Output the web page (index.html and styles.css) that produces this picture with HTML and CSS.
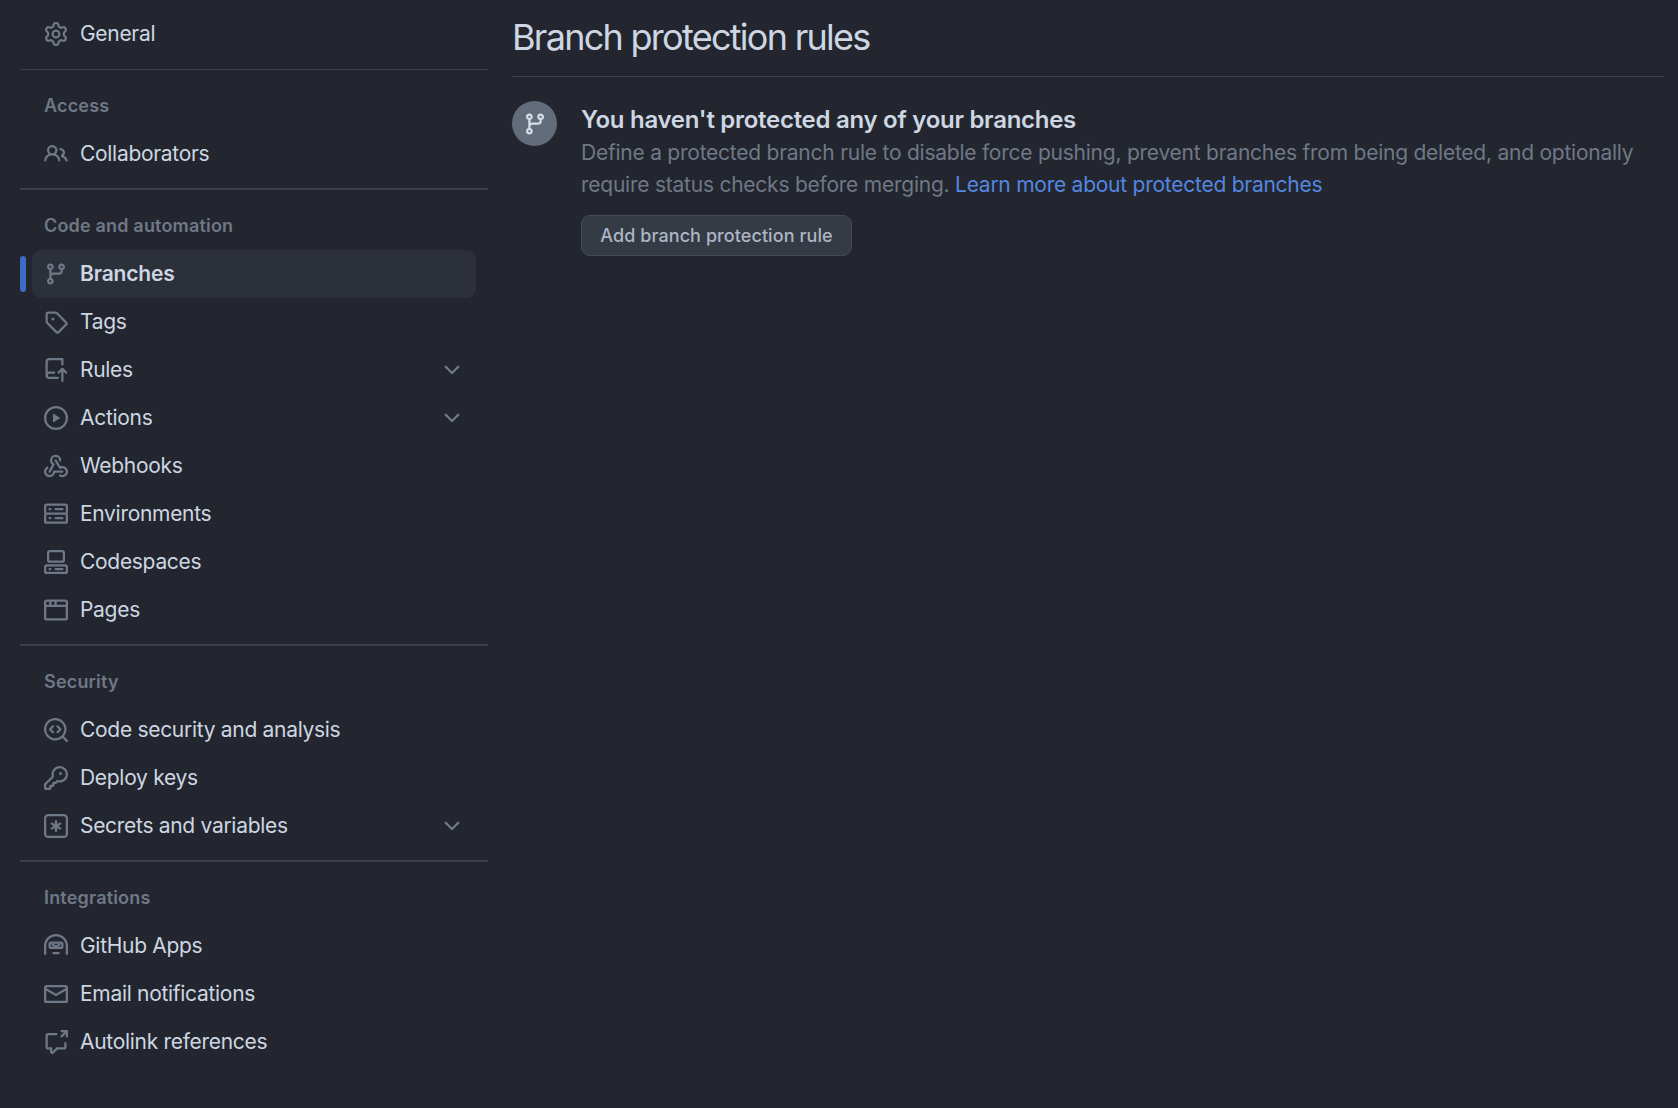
FILE: index.html
```html
<!DOCTYPE html>
<html lang="en">
<head>
<meta charset="utf-8">
<title>Branch protection rules</title>
<link rel="stylesheet" href="styles.css">
</head>
<body>
<svg class="defs" width="0" height="0" aria-hidden="true">
  <symbol id="i-gear" viewBox="0 0 16 16"><path d="M8 0a8.2 8.2 0 0 1 .701.031C9.444.095 9.99.645 10.16 1.29l.288 1.107c.018.066.079.158.212.224.231.114.454.243.668.386.123.082.233.09.299.071l1.103-.303c.644-.176 1.392.021 1.82.63.27.385.506.792.704 1.218.315.675.111 1.422-.364 1.891l-.814.806c-.049.048-.098.147-.088.294.016.257.016.515 0 .772-.01.147.038.246.088.294l.814.806c.475.469.679 1.216.364 1.891a7.977 7.977 0 0 1-.704 1.217c-.428.61-1.176.807-1.82.63l-1.102-.302c-.067-.019-.177-.011-.3.071a5.909 5.909 0 0 1-.668.386c-.133.066-.194.158-.211.224l-.29 1.106c-.168.646-.715 1.196-1.458 1.26a8.006 8.006 0 0 1-1.402 0c-.743-.064-1.289-.614-1.458-1.26l-.289-1.106c-.018-.066-.079-.158-.212-.224a5.738 5.738 0 0 1-.668-.386c-.123-.082-.233-.09-.299-.071l-1.103.303c-.644.176-1.392-.021-1.82-.63a8.12 8.12 0 0 1-.704-1.218c-.315-.675-.111-1.422.363-1.891l.815-.806c.05-.048.098-.147.088-.294a6.214 6.214 0 0 1 0-.772c.01-.147-.038-.246-.088-.294l-.815-.806C.635 6.045.431 5.298.746 4.623a7.92 7.92 0 0 1 .704-1.217c.428-.61 1.176-.807 1.82-.63l1.102.302c.067.019.177.011.3-.071.214-.143.437-.272.668-.386.133-.066.194-.158.211-.224l.29-1.106C6.009.645 6.556.095 7.299.03 7.53.01 7.764 0 8 0Zm-.571 1.525c-.036.003-.108.036-.137.146l-.289 1.105c-.147.561-.549.967-.998 1.189-.173.086-.34.183-.5.29-.417.278-.97.423-1.529.27l-1.103-.303c-.109-.03-.175.016-.195.045-.22.312-.412.644-.573.99-.014.031-.021.11.059.19l.815.806c.411.406.562.957.53 1.456a4.709 4.709 0 0 0 0 .582c.032.499-.119 1.05-.53 1.456l-.815.806c-.081.08-.073.159-.059.19.162.346.353.677.573.989.02.03.085.076.195.046l1.102-.303c.56-.153 1.113-.008 1.53.27.161.107.328.204.501.29.447.222.85.629.997 1.189l.289 1.105c.029.109.101.143.137.146a6.6 6.6 0 0 0 1.142 0c.036-.003.108-.036.137-.146l.289-1.105c.147-.561.549-.967.998-1.189.173-.086.34-.183.5-.29.417-.278.97-.423 1.529-.27l1.103.303c.109.029.175-.016.195-.045.22-.313.411-.644.573-.99.014-.031.021-.11-.059-.19l-.815-.806c-.411-.406-.562-.957-.53-1.456a4.709 4.709 0 0 0 0-.582c-.032-.499.119-1.05.53-1.456l.815-.806c.081-.08.073-.159.059-.19a6.464 6.464 0 0 0-.573-.989c-.02-.03-.085-.076-.195-.046l-1.102.303c-.56.153-1.113.008-1.53-.27a4.44 4.44 0 0 0-.501-.29c-.447-.222-.85-.629-.997-1.189l-.289-1.105c-.029-.11-.101-.143-.137-.146a6.6 6.6 0 0 0-1.142 0ZM11 8a3 3 0 1 1-6 0 3 3 0 0 1 6 0ZM9.5 8a1.5 1.5 0 1 0-3.001.001A1.5 1.5 0 0 0 9.5 8Z"/></symbol>
  <symbol id="i-people" viewBox="0 0 16 16"><path d="M2 5.5a3.5 3.5 0 1 1 5.898 2.549 5.508 5.508 0 0 1 3.034 4.084.75.75 0 1 1-1.482.235 4 4 0 0 0-7.9 0 .75.75 0 0 1-1.482-.236A5.507 5.507 0 0 1 3.102 8.05 3.493 3.493 0 0 1 2 5.5ZM11 4a3.001 3.001 0 0 1 2.22 5.018 5.01 5.01 0 0 1 2.56 3.012.749.749 0 0 1-.885.954.752.752 0 0 1-.549-.514 3.507 3.507 0 0 0-2.522-2.372.75.75 0 0 1-.574-.73v-.352a.75.75 0 0 1 .416-.672A1.5 1.5 0 0 0 11 5.5.75.75 0 0 1 11 4Zm-5.5-.5a2 2 0 1 0-.001 3.999A2 2 0 0 0 5.5 3.5Z"/></symbol>
  <symbol id="i-branch" viewBox="0 0 16 16"><path d="M9.5 3.25a2.25 2.25 0 1 1 3 2.122V6A2.5 2.5 0 0 1 10 8.5H6a1 1 0 0 0-1 1v1.128a2.251 2.251 0 1 1-1.5 0V5.372a2.25 2.25 0 1 1 1.5 0v1.836A2.493 2.493 0 0 1 6 7h4a1 1 0 0 0 1-1v-.628A2.25 2.25 0 0 1 9.5 3.25Zm-6 0a.75.75 0 1 0 1.5 0 .75.75 0 0 0-1.5 0Zm8.25-.75a.75.75 0 1 0 0 1.5.75.75 0 0 0 0-1.5ZM4.25 12a.75.75 0 1 0 0 1.5.75.75 0 0 0 0-1.5Z"/></symbol>
  <symbol id="i-tag" viewBox="0 0 16 16"><path d="M1 7.775V2.75C1 1.784 1.784 1 2.75 1h5.025c.464 0 .91.184 1.238.513l6.25 6.25a1.75 1.75 0 0 1 0 2.474l-5.026 5.026a1.75 1.75 0 0 1-2.474 0l-6.25-6.25A1.752 1.752 0 0 1 1 7.775Zm1.5 0c0 .066.026.13.073.177l6.25 6.25a.25.25 0 0 0 .354 0l5.025-5.025a.25.25 0 0 0 0-.354l-6.25-6.25a.25.25 0 0 0-.177-.073H2.75a.25.25 0 0 0-.25.25ZM6 5a1 1 0 1 1 0 2 1 1 0 0 1 0-2Z"/></symbol>
  <symbol id="i-push" viewBox="0 0 16 16"><path d="M1 2.5A2.5 2.5 0 0 1 3.5 0h8.75a.75.75 0 0 1 .75.75v3.5a.75.75 0 0 1-1.5 0V1.5h-8a1 1 0 0 0-1 1v6.708A2.493 2.493 0 0 1 3.5 9h3.25a.75.75 0 0 1 0 1.5H3.5a1 1 0 0 0 0 2h5.75a.75.75 0 0 1 0 1.5H3.5A2.5 2.5 0 0 1 1 11.5Zm13.23 7.79h-.001l-1.224-1.224v6.184a.75.75 0 0 1-1.5 0V9.066L10.28 10.29a.75.75 0 0 1-1.06-1.061l2.505-2.504a.75.75 0 0 1 1.06 0L15.29 9.23a.751.751 0 0 1-.018 1.042.751.751 0 0 1-1.042.018Z"/></symbol>
  <symbol id="i-play" viewBox="0 0 16 16"><path d="M8 0a8 8 0 1 1 0 16A8 8 0 0 1 8 0ZM1.5 8a6.5 6.5 0 1 0 13 0 6.5 6.5 0 0 0-13 0Zm4.879-2.773 4.264 2.559a.25.25 0 0 1 0 .428l-4.264 2.559A.25.25 0 0 1 6 10.559V5.442a.25.25 0 0 1 .379-.215Z"/></symbol>
  <symbol id="i-webhook" viewBox="0 0 16 16"><path d="M5.5 4.25a2.25 2.25 0 0 1 4.5 0 .75.75 0 0 0 1.5 0 3.75 3.75 0 1 0-6.14 2.889l-2.272 4.258a.75.75 0 0 0 1.324.706L7 7.25a.75.75 0 0 0-.309-1.015A2.25 2.25 0 0 1 5.5 4.25Z"/><path d="M7.364 3.607a.75.75 0 0 1 1.03.257l2.608 4.349a3.75 3.75 0 1 1-.628 6.785.75.75 0 0 1 .752-1.299 2.25 2.25 0 1 0-.033-3.88.75.75 0 0 1-1.03-.256L7.107 4.636a.75.75 0 0 1 .257-1.03Z"/><path d="M2.9 8.776A.75.75 0 0 1 2.625 9.8 2.25 2.25 0 1 0 6 11.75a.75.75 0 0 1 .75-.751h5.5a.75.75 0 0 1 0 1.5H7.425a3.751 3.751 0 1 1-5.55-3.998.75.75 0 0 1 1.024.274Z"/></symbol>
  <symbol id="i-server" viewBox="0 0 16 16"><path d="M1.75 1h12.5c.966 0 1.75.784 1.75 1.75v4c0 .372-.116.717-.314 1 .198.283.314.628.314 1v4a1.75 1.75 0 0 1-1.75 1.75H1.75A1.75 1.75 0 0 1 0 12.75v-4c0-.358.109-.707.314-1a1.739 1.739 0 0 1-.314-1v-4C0 1.784.784 1 1.75 1ZM1.5 2.75v4c0 .138.112.25.25.25h12.5a.25.25 0 0 0 .25-.25v-4a.25.25 0 0 0-.25-.25H1.75a.25.25 0 0 0-.25.25Zm.25 5.75a.25.25 0 0 0-.25.25v4c0 .138.112.25.25.25h12.5a.25.25 0 0 0 .25-.25v-4a.25.25 0 0 0-.25-.25ZM7 4.75A.75.75 0 0 1 7.75 4h4.5a.75.75 0 0 1 0 1.5h-4.5A.75.75 0 0 1 7 4.75ZM7.75 10h4.5a.75.75 0 0 1 0 1.5h-4.5a.75.75 0 0 1 0-1.5ZM3 4.75A.75.75 0 0 1 3.75 4h.5a.75.75 0 0 1 0 1.5h-.5A.75.75 0 0 1 3 4.75ZM3.75 10h.5a.75.75 0 0 1 0 1.5h-.5a.75.75 0 0 1 0-1.5Z"/></symbol>
  <symbol id="i-codespaces" viewBox="0 0 16 16"><path d="M0 11.25c0-.966.784-1.75 1.75-1.75h12.5c.966 0 1.75.784 1.75 1.75v3A1.75 1.75 0 0 1 14.25 16H1.75A1.75 1.75 0 0 1 0 14.25Zm2-9.5C2 .784 2.784 0 3.75 0h8.5C13.216 0 14 .784 14 1.75v5a1.75 1.75 0 0 1-1.75 1.75h-8.5A1.75 1.75 0 0 1 2 6.75Zm1.75-.25a.25.25 0 0 0-.25.25v5c0 .138.112.25.25.25h8.5a.25.25 0 0 0 .25-.25v-5a.25.25 0 0 0-.25-.25Zm-2 9.5a.25.25 0 0 0-.25.25v3c0 .138.112.25.25.25h12.5a.25.25 0 0 0 .25-.25v-3a.25.25 0 0 0-.25-.25Z"/><path d="M7 12.75a.75.75 0 0 1 .75-.75h4.5a.75.75 0 0 1 0 1.5h-4.5a.75.75 0 0 1-.75-.75Zm-4 0a.75.75 0 0 1 .75-.75h.5a.75.75 0 0 1 0 1.5h-.5a.75.75 0 0 1-.75-.75Z"/></symbol>
  <symbol id="i-browser" viewBox="0 0 16 16"><path d="M0 2.75C0 1.784.784 1 1.75 1h12.5c.966 0 1.75.784 1.75 1.75v10.5A1.75 1.75 0 0 1 14.25 15H1.75A1.75 1.75 0 0 1 0 13.25ZM14.5 6h-13v7.25c0 .138.112.25.25.25h12.5a.25.25 0 0 0 .25-.25Zm-6-3.5v2h6V2.75a.25.25 0 0 0-.25-.25ZM5 2.5v2h2v-2Zm-3.25 0a.25.25 0 0 0-.25.25V4.5h2v-2Z"/></symbol>
  <symbol id="i-codescan" viewBox="0 0 16 16"><path d="M8.47 4.97a.75.75 0 0 0 0 1.06L9.94 7.5 8.47 8.97a.75.75 0 1 0 1.06 1.06l2-2a.75.75 0 0 0 0-1.06l-2-2a.75.75 0 0 0-1.06 0ZM6.53 6.03a.75.75 0 0 0-1.06-1.06l-2 2a.75.75 0 0 0 0 1.06l2 2a.75.75 0 1 0 1.06-1.06L5.06 7.5l1.47-1.47Z"/><path d="M12.246 13.307a7.501 7.501 0 1 1 1.06-1.06l2.474 2.473a.749.749 0 0 1-.326 1.275.749.749 0 0 1-.734-.215ZM1.5 7.5a6.002 6.002 0 0 0 3.608 5.504 6.002 6.002 0 0 0 6.486-1.117.748.748 0 0 1 .292-.293A6 6 0 1 0 1.5 7.5Z"/></symbol>
  <symbol id="i-key" viewBox="0 0 16 16"><path d="M10.5 0a5.499 5.499 0 1 1-1.288 10.848l-.932.932a.749.749 0 0 1-.53.22H7v.75a.749.749 0 0 1-.22.53l-.5.5a.749.749 0 0 1-.53.22H5v.75a.749.749 0 0 1-.22.53l-.5.5a.749.749 0 0 1-.53.22h-2A1.75 1.75 0 0 1 0 14.25v-2c0-.199.079-.389.22-.53l4.932-4.932A5.5 5.5 0 0 1 10.5 0Zm-4 5.5c-.001.431.069.86.205 1.269a.75.75 0 0 1-.181.768L1.5 12.56v1.69c0 .138.112.25.25.25h1.69l.06-.06v-1.19a.75.75 0 0 1 .75-.75h1.19l.06-.06v-1.19a.75.75 0 0 1 .75-.75h1.19l1.023-1.025a.75.75 0 0 1 .768-.18A4 4 0 1 0 6.5 5.5ZM11 6a1 1 0 1 1 0-2 1 1 0 0 1 0 2Z"/></symbol>
  <symbol id="i-asterisk" viewBox="0 0 16 16"><path d="M0 2.75A2.75 2.75 0 0 1 2.75 0h10.5A2.75 2.75 0 0 1 16 2.75v10.5A2.75 2.75 0 0 1 13.25 16H2.75A2.75 2.75 0 0 1 0 13.25ZM2.75 1.5c-.69 0-1.25.56-1.25 1.25v10.5c0 .69.56 1.25 1.25 1.25h10.5c.69 0 1.25-.56 1.25-1.25V2.75c0-.69-.56-1.25-1.25-1.25Z"/><path d="M8 4a.75.75 0 0 1 .75.75V6.7l1.69-.975a.75.75 0 0 1 .75 1.3L9.5 8l1.69.976a.75.75 0 0 1-.75 1.298L8.75 9.3v1.951a.75.75 0 0 1-1.5 0V9.299l-1.69.976a.75.75 0 0 1-.75-1.3L6.5 8l-1.69-.975a.75.75 0 0 1 .75-1.3l1.69.976V4.75A.75.75 0 0 1 8 4Z"/></symbol>
  <symbol id="i-hubot" viewBox="0 0 16 16"><path d="M0 8a8 8 0 0 1 16 0v5.25a.75.75 0 0 1-1.5 0V8a6.5 6.5 0 1 0-13 0v5.25a.75.75 0 0 1-1.5 0Z"/><path d="M3 6.75C3 5.784 3.784 5 4.75 5h6.5c.966 0 1.75.784 1.75 1.75v1.5A1.75 1.75 0 0 1 11.25 10h-6.5A1.75 1.75 0 0 1 3 8.25Zm1.75-.25a.25.25 0 0 0-.25.25v1.5c0 .138.112.25.25.25h6.5a.25.25 0 0 0 .25-.25v-1.5a.25.25 0 0 0-.25-.25Z"/><path d="M5.22 6.72a.75.75 0 0 1 1.06 0L8 7.44l1.72-.72a.75.75 0 0 1 1.06 1.06L8.53 9.03a.75.75 0 0 1-1.06 0L5.22 7.78a.75.75 0 0 1 0-1.06Z"/><path d="M6.25 12h3.5a.75.75 0 0 1 0 1.5h-3.5a.75.75 0 0 1 0-1.5Z"/></symbol>
  <symbol id="i-mail" viewBox="0 0 16 16"><path d="M1.75 2h12.5c.966 0 1.75.784 1.75 1.75v8.5A1.75 1.75 0 0 1 14.25 14H1.75A1.75 1.75 0 0 1 0 12.25v-8.5C0 2.784.784 2 1.75 2ZM1.5 12.251c0 .138.112.25.25.25h12.5a.25.25 0 0 0 .25-.25V5.809L8.38 9.397a.75.75 0 0 1-.76 0L1.5 5.809v6.442Zm13-8.181v-.32a.25.25 0 0 0-.25-.25H1.75a.25.25 0 0 0-.25.25v.32L8 7.88Z"/></symbol>
  <symbol id="i-xref" viewBox="0 0 16 16"><path d="M2.75 3.5a.25.25 0 0 0-.25.25v7.5c0 .138.112.25.25.25h2a.75.75 0 0 1 .75.75v2.19l2.72-2.72a.749.749 0 0 1 .53-.22h4.5a.25.25 0 0 0 .25-.25v-2.5a.75.75 0 0 1 1.5 0v2.5A1.75 1.75 0 0 1 13.25 13H9.06l-2.573 2.573A1.457 1.457 0 0 1 4 14.543V13H2.75A1.75 1.75 0 0 1 1 11.25v-7.5C1 2.784 1.784 2 2.75 2h5.5a.75.75 0 0 1 0 1.5ZM11 .75a.75.75 0 0 1 .75-.75h3.5a.75.75 0 0 1 .75.75v3.5a.75.75 0 0 1-1.5 0V2.56l-2.22 2.22a.75.75 0 1 1-1.06-1.06L13.44 1.5h-1.69A.75.75 0 0 1 11 .75Z"/></symbol>
  <symbol id="i-chevron" viewBox="0 0 16 16"><path d="M12.78 5.22a.749.749 0 0 1 0 1.06l-4.25 4.25a.749.749 0 0 1-1.06 0L3.22 6.28a.749.749 0 1 1 1.06-1.06L8 8.939l3.72-3.719a.749.749 0 0 1 1.06 0Z"/></symbol>
</svg>

<div class="page">
  <nav class="sidebar">
    <ul class="list">
      <li class="row"><svg class="icon"><use href="#i-gear"/></svg><span class="label">General</span></li>
    </ul>
    <hr class="divider divider-thin">
    <h2 class="group-title">Access</h2>
    <ul class="list">
      <li class="row"><svg class="icon"><use href="#i-people"/></svg><span class="label">Collaborators</span></li>
    </ul>
    <hr class="divider">
    <h2 class="group-title">Code and automation</h2>
    <ul class="list">
      <li class="row row-active"><svg class="icon"><use href="#i-branch"/></svg><span class="label">Branches</span></li>
      <li class="row"><svg class="icon"><use href="#i-tag"/></svg><span class="label">Tags</span></li>
      <li class="row"><svg class="icon"><use href="#i-push"/></svg><span class="label">Rules</span><svg class="chevron"><use href="#i-chevron"/></svg></li>
      <li class="row"><svg class="icon"><use href="#i-play"/></svg><span class="label">Actions</span><svg class="chevron"><use href="#i-chevron"/></svg></li>
      <li class="row"><svg class="icon"><use href="#i-webhook"/></svg><span class="label">Webhooks</span></li>
      <li class="row"><svg class="icon"><use href="#i-server"/></svg><span class="label">Environments</span></li>
      <li class="row"><svg class="icon"><use href="#i-codespaces"/></svg><span class="label">Codespaces</span></li>
      <li class="row"><svg class="icon"><use href="#i-browser"/></svg><span class="label">Pages</span></li>
    </ul>
    <hr class="divider">
    <h2 class="group-title">Security</h2>
    <ul class="list">
      <li class="row"><svg class="icon"><use href="#i-codescan"/></svg><span class="label">Code security and analysis</span></li>
      <li class="row"><svg class="icon"><use href="#i-key"/></svg><span class="label">Deploy keys</span></li>
      <li class="row"><svg class="icon"><use href="#i-asterisk"/></svg><span class="label">Secrets and variables</span><svg class="chevron"><use href="#i-chevron"/></svg></li>
    </ul>
    <hr class="divider">
    <h2 class="group-title">Integrations</h2>
    <ul class="list">
      <li class="row"><svg class="icon"><use href="#i-hubot"/></svg><span class="label">GitHub Apps</span></li>
      <li class="row"><svg class="icon"><use href="#i-mail"/></svg><span class="label">Email notifications</span></li>
      <li class="row"><svg class="icon"><use href="#i-xref"/></svg><span class="label">Autolink references</span></li>
    </ul>
  </nav>

  <main class="content">
    <h1 class="page-title">Branch protection rules</h1>
    <section class="empty">
      <div class="empty-badge"><svg class="empty-icon"><use href="#i-branch"/></svg></div>
      <div class="empty-body">
        <h3 class="empty-title">You haven't protected any of your branches</h3>
        <p class="empty-text">Define a protected branch rule to disable force pushing, prevent branches from being deleted, and optionally require status checks before merging. <a class="link" href="#">Learn more about protected branches</a></p>
        <button class="btn" type="button">Add branch protection rule</button>
      </div>
    </section>
  </main>
</div>
</body>
</html>
```

FILE: styles.css
```css
* { box-sizing: border-box; }

html, body {
  margin: 0;
  height: 100%;
}

body {
  background: #23262e;
  color: #cdd6e2;
  font-family: Inter, "Liberation Sans", sans-serif;
  font-size: 21px;
  overflow: hidden;
}

.defs { position: absolute; }

.page {
  display: flex;
  gap: 24px;
  padding-left: 20px;
  padding-right: 14px;
}

.sidebar {
  width: 468px;
  flex: none;
  padding-top: 10px;
}

.list {
  list-style: none;
  margin: 0;
  padding: 0;
}

.row {
  position: relative;
  display: flex;
  align-items: center;
  height: 48px;
  margin: 0 12px;
  padding: 0 12px;
  border-radius: 9px;
  letter-spacing: -0.3px;
}

.row-active {
  background: #2c3039;
  font-weight: 600;
  letter-spacing: -0.15px;
}

.row-active::before {
  content: "";
  position: absolute;
  left: -12px;
  top: 6px;
  width: 6px;
  height: 36px;
  border-radius: 3px;
  background: #3e6bc5;
}

.icon {
  width: 24px;
  height: 24px;
  flex: none;
  fill: #6f7886;
  margin-right: 12px;
}

.label {
  flex: 1;
  padding-bottom: 2px;
  white-space: nowrap;
}

.chevron {
  width: 24px;
  height: 24px;
  flex: none;
  fill: #6f7886;
}

.divider {
  border: 0;
  height: 2px;
  margin: 10px 0 11px;
  background: #3a3f49;
}

.divider-thin { height: 1px; margin-top: 11px; }

.group-title {
  margin: 0;
  height: 49px;
  padding: 1px 24px 0;
  font-size: 18px;
  font-weight: 600;
  line-height: 47px;
  letter-spacing: 0.18px;
  color: #6f7886;
}

.content {
  flex: 1;
  min-width: 0;
}

.page-title {
  margin: 0;
  height: 77px;
  padding-top: 13px;
  font-size: 36px;
  font-weight: 400;
  line-height: 48px;
  letter-spacing: -1.72px;
  color: #cdd6e2;
  border-bottom: 1px solid #3a3f49;
}

.empty {
  display: flex;
  gap: 24px;
  margin-top: 24px;
}

.empty-badge {
  width: 45px;
  height: 45px;
  flex: none;
  display: flex;
  align-items: center;
  justify-content: center;
  border-radius: 50%;
  background: #626c7a;
}

.empty-icon {
  width: 24px;
  height: 24px;
  fill: #d5dce6;
}

.empty-body { flex: 1; min-width: 0; }

.empty-title {
  margin: 0;
  padding-top: 1px;
  height: 36px;
  font-size: 24px;
  font-weight: 600;
  line-height: 36px;
  letter-spacing: -0.28px;
  color: #cdd6e2;
}

.empty-text {
  margin: 0;
  line-height: 32px;
  letter-spacing: -0.24px;
  color: #6f7886;
}

.link {
  color: #5487e0;
  text-decoration: none;
  letter-spacing: -0.25px;
}

.btn {
  display: block;
  width: 271px;
  height: 41px;
  margin-top: 14px;
  padding: 0;
  background: #353b44;
  border: 1.5px solid #454b55;
  border-radius: 9px;
  color: #acb6c4;
  font: 500 18px/1 Inter, "Liberation Sans", sans-serif;
  letter-spacing: 0.08px;
}
```
